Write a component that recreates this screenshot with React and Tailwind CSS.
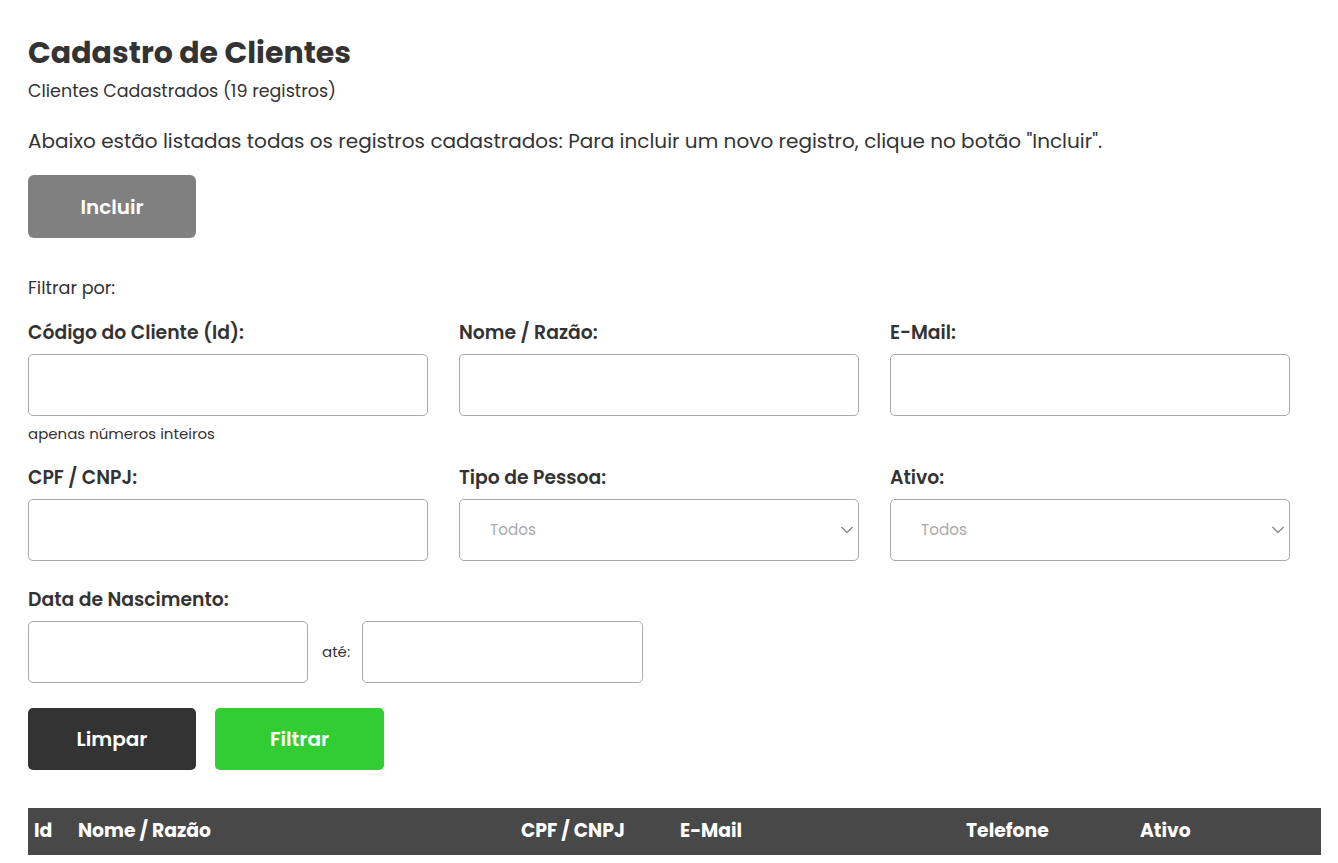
import React from 'react';

const font = { fontFamily: '"Poppins", "Open Sans", "Noto Sans", sans-serif' };

const Field = ({ label, children, hint }) => (
  <div className="pr-[31px]">
    <label className="block text-[18.8px] font-semibold leading-[24px] text-[#333] mb-[9px]">{label}</label>
    {children}
    {hint && <p className="text-[15px] leading-[20px] text-[#333] mt-[8px]">{hint}</p>}
  </div>
);

const TextInput = ({ className = 'w-full' }) => (
  <input type="text" className={`${className} h-[62px] rounded-[5px] border border-[#aaa] bg-white px-[30px] outline-none`} />
);

const Select = () => (
  <div className="relative">
    <select className="w-full h-[62px] appearance-none rounded-[5px] border border-[#aaa] bg-white px-[30px] text-[15.2px] text-[#aaa] outline-none">
      <option>Todos</option>
      <option>Física</option>
      <option>Jurídica</option>
    </select>
    <svg className="pointer-events-none absolute right-[5px] top-[24px] w-[14px] h-[14px]" viewBox="0 0 14 14" fill="none" stroke="#8a8a8a" strokeWidth="1.5">
      <path d="M1.5 4l5.5 5.5 5.5-5.5" />
    </svg>
  </div>
);

export default function App() {
  return (
    <div className="min-h-screen bg-white" style={font}>
      <div className="ml-[28px] w-[1293px] pt-[34px] text-[#333]">
        <h1 className="text-[30px] font-bold leading-[38px]">Cadastro de Clientes</h1>
        <p className="text-[17.5px] leading-[24px] mt-[7px]">Clientes Cadastrados (19 registros)</p>
        <p className="text-[20px] leading-[28px] mt-[24px]">
          Abaixo estão listadas todas os registros cadastrados: Para incluir um novo registro, clique no botão "Incluir".
        </p>
        <button className="mt-[20px] w-[168px] h-[63px] rounded-[6px] bg-[#808080] text-white text-[20px] font-semibold">
          Incluir
        </button>
        <p className="text-[17.6px] leading-[24px] mt-[38px]">Filtrar por:</p>

        <div className="grid grid-cols-3 mt-[21px]">
          <Field label="Código do Cliente (Id):" hint="apenas números inteiros"><TextInput /></Field>
          <Field label="Nome / Razão:"><TextInput /></Field>
          <Field label="E-Mail:"><TextInput /></Field>
        </div>

        <div className="grid grid-cols-3 mt-[22px]">
          <Field label="CPF / CNPJ:"><TextInput /></Field>
          <Field label="Tipo de Pessoa:"><Select /></Field>
          <Field label="Ativo:"><Select /></Field>
        </div>

        <div className="mt-[27px]">
          <label className="block text-[18.8px] font-semibold leading-[24px] mb-[9px]">Data de Nascimento:</label>
          <div className="flex items-center">
            <TextInput className="w-[280px]" />
            <span className="text-[15px] ml-[14px] mr-[12px]">até:</span>
            <TextInput className="w-[281px]" />
          </div>
        </div>

        <div className="flex gap-[19px] mt-[25px]">
          <button className="w-[168px] h-[62px] rounded-[5px] bg-[#333] text-white text-[20px] font-semibold">Limpar</button>
          <button className="w-[169px] h-[62px] rounded-[5px] bg-[#32cd32] text-white text-[20px] font-semibold">Filtrar</button>
        </div>

        <table className="mt-[38px] w-full border-collapse">
          <thead>
            <tr className="bg-[#484848] text-white text-[18.8px] text-left">
              <th className="h-[47px] pl-[6px] w-[50px] font-bold">Id</th>
              <th className="w-[443px] font-bold">Nome / Razão</th>
              <th className="w-[159px] font-bold">CPF / CNPJ</th>
              <th className="w-[286px] font-bold">E-Mail</th>
              <th className="w-[174px] font-bold">Telefone</th>
              <th className="font-bold">Ativo</th>
            </tr>
          </thead>
        </table>
      </div>
    </div>
  );
}
